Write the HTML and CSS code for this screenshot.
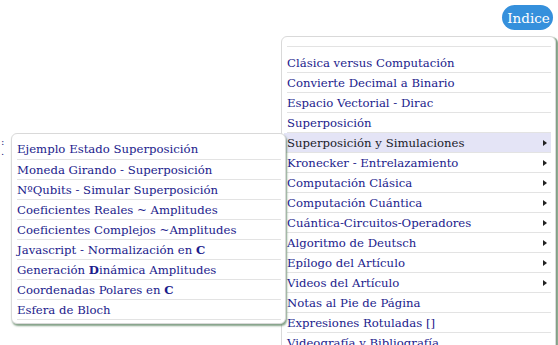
FILE: index.html
```html
<!DOCTYPE html>
<html lang="es">
<head>
<meta charset="utf-8">
<title>Indice</title>
<link rel="stylesheet" href="styles.css">
</head>
<body>
<div class="page">
  <div class="bg-text"><span>:</span><span>.</span></div>
  <button class="indice">Indice</button>
  <ul class="menu main">
    <li class="blank"></li>
    <li>Clásica versus Computación</li>
    <li>Convierte Decimal a Binario</li>
    <li>Espacio Vectorial - Dirac</li>
    <li>Superposición</li>
    <li class="sub active">Superposición y Simulaciones</li>
    <li class="sub">Kronecker - Entrelazamiento</li>
    <li class="sub">Computación Clásica</li>
    <li class="sub">Computación Cuántica</li>
    <li class="sub">Cuántica-Circuitos-Operadores</li>
    <li class="sub">Algoritmo de Deutsch</li>
    <li class="sub">Epílogo del Artículo</li>
    <li class="sub">Videos del Artículo</li>
    <li>Notas al Pie de Página</li>
    <li>Expresiones Rotuladas []</li>
    <li>Videografía y Bibliografía</li>
  </ul>
  <ul class="menu submenu">
    <li>Ejemplo Estado Superposición</li>
    <li>Moneda Girando - Superposición</li>
    <li>NºQubits - Simular Superposición</li>
    <li>Coeficientes Reales ~ Amplitudes</li>
    <li>Coeficientes Complejos ~Amplitudes</li>
    <li>Javascript - Normalización en <b>C</b></li>
    <li>Generación <b>D</b>inámica Amplitudes</li>
    <li>Coordenadas Polares en <b>C</b></li>
    <li>Esfera de Bloch</li>
  </ul>
</div>
</body>
</html>
```
FILE: styles.css
```css
html, body {
  margin: 0;
  padding: 0;
  background: #fff;
  overflow: hidden;
}
.page {
  position: relative;
  width: 558px;
  height: 345px;
  overflow: hidden;
  font-family: "DejaVu Serif", serif;
}
.bg-text {
  display: flex;
  flex-direction: column;
  padding: 137px 0 0 1px;
  font-size: 10px;
  line-height: 10px;
  color: #1f1f7a;
}
.indice {
  position: absolute;
  left: 502px;
  top: 5px;
  width: 51px;
  height: 25px;
  border: none;
  border-radius: 13px;
  background: #3590dc;
  color: #fff;
  font-family: "DejaVu Serif", serif;
  font-size: 13.5px;
  padding: 0 0 0 2px;
}
.menu {
  list-style: none;
  margin: 0;
  background: #fff;
  border: 1px solid #d9d9d9;
  border-radius: 6px;
  font-size: 11.7px;
  color: #1b1b8c;
}
.menu li {
  height: 19px;
  line-height: 21px;
  border-bottom: 1px solid #e3e3e3;
  white-space: nowrap;
  position: relative;
}
.main {
  position: absolute;
  left: 281px;
  top: 36px;
  width: 264px;
  height: 340px;
  padding: 0 4px 0 5px;
  box-shadow: 2px 1px 1px rgba(90, 130, 95, 0.75);
}
.main li.blank {
  height: 9px;
  margin-bottom: 6px;
}
.main li.active {
  background: #e4e4f6;
  color: #1a1a2a;
  margin-left: -3px;
  padding-left: 3px;
}
.main li.sub::after {
  content: "";
  position: absolute;
  right: 4px;
  top: 7px;
  border-left: 4px solid #222;
  border-top: 3px solid transparent;
  border-bottom: 3px solid transparent;
}
.submenu {
  position: absolute;
  left: 11px;
  top: 133px;
  width: 264px;
  padding: 5px 4px 3px 5px;
  box-shadow: 1px 2px 2px rgba(90, 130, 95, 0.75);
}
.submenu li:first-child {
  height: 20px;
}
.submenu b {
  font-weight: bold;
}
```
